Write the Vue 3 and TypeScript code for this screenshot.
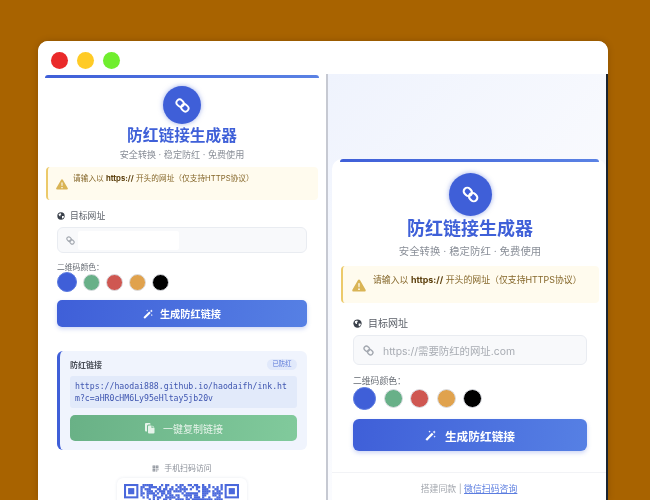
<script setup lang="ts">
const qr: { x: number; y: number }[] = [];
let seed = 7;
for (let r = 0; r < 10; r++) {
  for (let c = 8; c < 48; c++) {
    seed = (seed * 1103 + 12345) % 65536;
    if (seed % 100 < 52) qr.push({ x: c, y: r });
  }
}
const swatches = ["blue", "green", "red", "orange", "black"];
</script>

<template>
  <svg class="defs" aria-hidden="true">
    <symbol id="i-link" viewBox="0 0 24 24">
      <g fill="none" stroke="currentColor" stroke-width="3" transform="rotate(45 12 12)">
        <rect x="0.500" y="7" width="12.500" height="10" rx="5" />
        <rect x="11" y="7" width="12.500" height="10" rx="5" />
      </g>
    </symbol>
    <symbol id="i-globe" viewBox="0 0 24 24">
      <circle cx="12" cy="12" r="11" fill="currentColor" />
      <path d="M5 6l6-2 2 3-3 3 1 3-3 0-3-4zM15 12l5 0 1 3-4 5-2-3z" fill="#fff" />
    </symbol>
    <symbol id="i-warn" viewBox="0 0 24 24">
      <path d="M12 2.500a2 2 0 0 1 1.700 1l9.600 16.600a2 2 0 0 1-1.700 3H2.400a2 2 0 0 1-1.700-3L10.300 3.500a2 2 0 0 1 1.700-1z" fill="currentColor" />
      <path d="M10.800 9h2.400l-.4 7h-1.600zM10.700 18h2.600v2.400h-2.600z" fill="#fff" />
    </symbol>
    <symbol id="i-wand" viewBox="0 0 24 24">
      <path d="M1 20L15 6l3.500 3.500L4.500 23.500z" fill="currentColor" />
      <path d="M20 1l1.200 2.300L23.500 4.500l-2.300 1.200L20 8l-1.200-2.300L16.500 4.500l2.300-1.200zM10 1l.8 1.700L12.500 3.500l-1.700.8L10 6l-.8-1.700L7.500 3.500l1.700-.8zM21 12l.8 1.700 1.700.8-1.700.8-.8 1.700-.8-1.700-1.700-.8 1.700-.8z" fill="currentColor" />
    </symbol>
    <symbol id="i-copy" viewBox="0 0 24 24">
      <path d="M2 4a2 2 0 0 1 2-2h7a2 2 0 0 1 2 2v1H9a3 3 0 0 0-3 3v11H4a2 2 0 0 1-2-2z" fill="currentColor" />
      <path d="M8 9a2 2 0 0 1 2-2h5v5h6v9a2 2 0 0 1-2 2h-9a2 2 0 0 1-2-2zM17 7l4 4h-4z" fill="currentColor" />
    </symbol>
    <symbol id="i-qr" viewBox="0 0 24 24">
      <path d="M2 2h9v9H2zm3 3v3h3V5zM13 2h9v9h-9zm3 3v3h3V5zM2 13h9v9H2zm3 3v3h3v-3zM13 13h3v3h-3zM19 13h3v5h-3zM13 19h5v3h-5zM16 16h2v2h-2z" fill="currentColor" fill-rule="evenodd" />
    </symbol>
  </svg>

  <div class="desk">
    <div class="window">
      <div class="titlebar">
        <span class="dot dot-red"></span>
        <span class="dot dot-yellow"></span>
        <span class="dot dot-green"></span>
      </div>
      <div class="panes">
        <section class="pane pane-left">
          <div class="card">
            <div class="badge"><svg class="badge-icon"><use href="#i-link" /></svg></div>
            <h1 class="title">防红链接生成器</h1>
            <p class="subtitle">安全转换 · 稳定防红 · 免费使用</p>
            <div class="alert">
              <svg class="alert-icon"><use href="#i-warn" /></svg>
              <span class="alert-text">请输入以 <b>https://</b> 开头的网址（仅支持HTTPS协议）</span>
            </div>
            <div class="label"><svg class="label-icon"><use href="#i-globe" /></svg>目标网址</div>
            <div class="input">
              <svg class="input-icon"><use href="#i-link" /></svg>
              <span class="input-mask"></span>
            </div>
            <div class="color-label">二维码颜色：</div>
            <div class="swatches">
              <span v-for="(s, i) in swatches" :key="s" class="swatch" :class="[s, { active: i === 0 }]"></span>
            </div>
            <button class="primary"><svg class="btn-icon"><use href="#i-wand" /></svg>生成防红链接</button>
            <div class="result">
              <div class="result-head">
                <span class="result-title">防红链接</span>
                <span class="tag">已防红</span>
              </div>
              <div class="code">https://haodai888.github.io/haodaifh/ink.htm?c=aHR0cHM6Ly95eHltay5jb20v</div>
              <button class="copy"><svg class="copy-icon"><use href="#i-copy" /></svg>一键复制链接</button>
            </div>
            <div class="scan"><svg class="scan-icon"><use href="#i-qr" /></svg>手机扫码访问</div>
            <div class="qr-card">
              <svg class="qr" viewBox="0 0 56 56">
                <g fill="#4a68dc">
                  <rect v-for="(m, i) in qr" :key="i" :x="m.x" :y="m.y" width="1.1" height="1.1" />
                </g>
                <g v-for="x in [0, 49]" :key="x">
                  <rect :x="x" y="0" width="7" height="7" fill="#4a68dc" />
                  <rect :x="x + 1" y="1" width="5" height="5" fill="#fff" />
                  <rect :x="x + 2" y="2" width="3" height="3" fill="#4a68dc" />
                </g>
              </svg>
            </div>
          </div>
        </section>

        <section class="pane pane-right">
          <div class="card">
            <div class="badge"><svg class="badge-icon"><use href="#i-link" /></svg></div>
            <h1 class="title">防红链接生成器</h1>
            <p class="subtitle">安全转换 · 稳定防红 · 免费使用</p>
            <div class="alert">
              <svg class="alert-icon"><use href="#i-warn" /></svg>
              <span class="alert-text">请输入以 <b>https://</b> 开头的网址（仅支持HTTPS协议）</span>
            </div>
            <div class="label"><svg class="label-icon"><use href="#i-globe" /></svg>目标网址</div>
            <div class="input">
              <svg class="input-icon"><use href="#i-link" /></svg>
              <span class="placeholder">https://需要防红的网址.com</span>
            </div>
            <div class="color-label">二维码颜色：</div>
            <div class="swatches">
              <span v-for="(s, i) in swatches" :key="s" class="swatch" :class="[s, { active: i === 0 }]"></span>
            </div>
            <button class="primary"><svg class="btn-icon"><use href="#i-wand" /></svg>生成防红链接</button>
            <div class="footer">搭建同款 | <a class="footer-link">微信扫码咨询</a></div>
          </div>
        </section>
      </div>
    </div>
  </div>
</template>

<style>
html, body { margin: 0; height: 500px; overflow: hidden; background: #a86300; }
</style>

<style scoped>
.defs { display: none; }
.desk {
  box-sizing: border-box;
  width: 650px;
  height: 500px;
  padding: 41px 42px 0 38px;
  overflow: hidden;
  background: #a86300;
  font-family: Inter, "Noto Sans CJK SC", sans-serif;
  filter: blur(0.5px);
}
.window {
  height: 459px;
  display: flex;
  flex-direction: column;
  border-radius: 10px 10px 0 0;
  overflow: hidden;
  background: #fff;
  box-shadow: 0 0 6px rgba(60, 30, 0, 0.25);
}
.titlebar {
  flex: 0 0 33px;
  display: flex;
  align-items: center;
  gap: 9px;
  padding: 5px 0 0 13px;
  box-sizing: border-box;
  background: #fff;
}
.dot { width: 17px; height: 17px; border-radius: 50%; }
.dot-red { background: #ea2a2a; }
.dot-yellow { background: #ffcb26; }
.dot-green { background: #70ee2e; }
.panes { flex: 1; display: flex; min-height: 0; }
.pane { box-sizing: border-box; }
.pane-left { width: 288px; background: #fff; padding-top: 1px; }
.pane-right {
  flex: 1;
  padding: 85px 0 0 4px;
  border-left: 2px solid #c6c9d2;
  border-right: 2px solid #1a2430;
  background: linear-gradient(135deg, #eff3fd 0%, #fafbfe 60%, #f6f8fe 100%);
}
.card {
  position: relative;
  display: flex;
  flex-direction: column;
  background: #fff;
  border-radius: 10px;
}
.card > * { flex: none; }
.card::before {
  content: "";
  position: absolute;
  top: 0;
  height: 3px;
  border-radius: 3px 3px 0 0;
  background: linear-gradient(90deg, #3f5fd8, #5a82e4);
}
.badge {
  align-self: center;
  display: flex;
  align-items: center;
  justify-content: center;
  border-radius: 50%;
  background: #3f5fd8;
  color: #fff;
  box-shadow: 0 0 5px rgba(63, 95, 216, 0.5);
}
.title { margin: 0; text-align: center; font-weight: 700; color: #3f60d8; }
.subtitle { margin: 0; text-align: center; color: #8a8f98; }
.alert {
  display: flex;
  box-sizing: border-box;
  background: #fffbee;
  border-left: 2px solid #ecca6a;
  border-radius: 4px;
  color: #85672a;
}
.alert b { color: #5e4210; }
.alert-icon { color: #d9b455; flex: none; }
.label { display: flex; align-items: center; color: #5b6068; }
.label-icon { color: #3a404a; flex: none; }
.input {
  display: flex;
  align-items: center;
  box-sizing: border-box;
  background: #f8f9fb;
  border: 1px solid #e9ecf1;
  border-radius: 6px;
}
.input-icon { color: #a3a8b0; flex: none; }
.input-mask { background: #fff; border-radius: 2px; }
.placeholder { color: #a8acb3; }
.color-label { color: #666b73; }
.swatches { display: flex; align-items: center; }
.swatch {
  box-sizing: border-box;
  border-radius: 50%;
  border: 1px solid #dcdee3;
}
.swatch.blue { background: #3f5fd8; }
.swatch.green { background: #68b088; }
.swatch.red { background: #cf5751; }
.swatch.orange { background: #e0a24d; }
.swatch.black { background: #000; }
.swatch.active { border-color: #5c7be0; }
.primary {
  display: flex;
  align-items: center;
  justify-content: center;
  box-sizing: border-box;
  border: 0;
  padding: 0;
  color: #fff;
  font-family: inherit;
  font-weight: 700;
  background: linear-gradient(100deg, #3f5fd8, #5680e4);
  box-shadow: 0 2px 4px rgba(63, 95, 216, 0.25);
}
.pane-left .card { height: 500px; padding: 11px 19px 0; }
.pane-left .card::before { left: 7px; right: 7px; }
.pane-left .badge { width: 38px; height: 38px; }
.pane-left .badge-icon { width: 15px; height: 15px; }
.pane-left .title { margin-top: 2px; font-size: 15.7px; line-height: 20px; }
.pane-left .subtitle { margin-top: 3px; font-size: 9.1px; line-height: 12px; }
.pane-left .alert { margin: 6px -11px 0; height: 33px; padding: 6px 0 0 8px; font-size: 7.7px; line-height: 12px; gap: 5px; }
.pane-left .alert-icon { width: 12px; height: 12px; margin-top: 5px; }
.pane-left .label { margin-top: 10px; font-size: 8.8px; line-height: 12px; }
.pane-left .label-icon { width: 8px; height: 8px; margin-right: 5px; }
.pane-left .input { margin-top: 5px; height: 26px; padding-left: 8px; }
.pane-left .input-icon { width: 9px; height: 9px; margin-right: 3px; }
.pane-left .input-mask { width: 101px; height: 19px; }
.pane-left .color-label { margin-top: 9px; font-size: 7.8px; line-height: 10px; }
.pane-left .swatches { height: 20px; gap: 6px; }
.pane-left .swatch { width: 17px; height: 17px; }
.pane-left .swatch.active { width: 20px; height: 20px; }
.pane-left .primary { margin-top: 8px; height: 27px; border-radius: 5px; font-size: 10.2px; }
.pane-left .btn-icon { width: 10px; height: 10px; margin-right: 7px; }

.result {
  box-sizing: border-box;
  margin-top: 24px;
  height: 99px;
  padding: 7px 10px 0 10px;
  background: #f0f4fd;
  border-left: 3px solid #3f5fd8;
  border-radius: 6px;
}
.result-head { display: flex; align-items: center; justify-content: space-between; height: 12px; }
.result-title { font-size: 8px; font-weight: 700; color: #4a4f58; }
.tag {
  box-sizing: border-box;
  width: 30px;
  height: 11px;
  border-radius: 6px;
  background: #e1e9fb;
  color: #5a78d8;
  font-size: 6.3px;
  line-height: 11px;
  text-align: center;
}
.code {
  box-sizing: border-box;
  margin-top: 6px;
  height: 32px;
  padding: 4px 5px;
  border-radius: 3px;
  background: #e2eafa;
  color: #3f56b0;
  font-family: "DejaVu Sans Mono", monospace;
  font-size: 8.2px;
  line-height: 12px;
  word-break: break-all;
}
.copy {
  display: flex;
  align-items: center;
  justify-content: center;
  box-sizing: border-box;
  width: 100%;
  height: 26px;
  margin-top: 7px;
  border: 0;
  padding: 0;
  border-radius: 5px;
  color: #e6f3ea;
  font-family: inherit;
  font-size: 10px;
  background: linear-gradient(100deg, #69b186, #81ca9c);
}
.copy-icon { width: 12px; height: 12px; margin-right: 7px; }
.scan {
  display: flex;
  align-items: center;
  justify-content: center;
  margin-top: 13px;
  font-size: 7.9px;
  line-height: 10px;
  color: #8a8f98;
}
.scan-icon { width: 7px; height: 7px; margin-right: 5px; }
.qr-card {
  align-self: center;
  box-sizing: border-box;
  width: 130px;
  height: 130px;
  margin-top: 5px;
  padding: 6px 7px;
  border-radius: 6px;
  background: #fff;
  box-shadow: 0 0 3px rgba(60, 80, 130, 0.12);
}
.qr { display: block; width: 115px; height: 115px; }

.pane-right .card { height: 341px; padding: 14px 19px 0 21px; }
.pane-right .card::before { left: 8px; right: 7px; }
.pane-right .badge { width: 43px; height: 43px; }
.pane-right .badge-icon { width: 17px; height: 17px; }
.pane-right .title { margin-top: 1px; font-size: 18px; line-height: 24px; }
.pane-right .subtitle { margin-top: 4px; font-size: 10.4px; line-height: 14px; }
.pane-right .alert { margin: 7px -12px 0; height: 37px; padding: 7px 0 0 9px; font-size: 8.9px; line-height: 13px; gap: 7px; }
.pane-right .alert-icon { width: 14px; height: 14px; margin-top: 5px; }
.pane-right .label { margin-top: 13px; font-size: 10px; line-height: 14px; }
.pane-right .label-icon { width: 9px; height: 9px; margin-right: 6px; }
.pane-right .input { margin-top: 5px; height: 30px; padding-left: 9px; }
.pane-right .input-icon { width: 11px; height: 11px; margin-right: 9px; }
.pane-right .placeholder { font-size: 10.4px; }
.pane-right .color-label { margin-top: 10px; font-size: 8.8px; line-height: 12px; }
.pane-right .swatches { height: 23px; gap: 7.5px; }
.pane-right .swatch { width: 19px; height: 19px; }
.pane-right .swatch.active { width: 23px; height: 23px; }
.pane-right .primary { margin-top: 9px; height: 32px; border-radius: 6px; font-size: 11.7px; }
.pane-right .btn-icon { width: 11px; height: 11px; margin-right: 9px; }
.footer {
  margin: 21px -19px 0 -21px;
  padding-top: 10px;
  border-top: 1px solid #f2f3f6;
  text-align: center;
  font-size: 8.9px;
  line-height: 12px;
  color: #a3a7ae;
}
.footer-link { color: #5b7de0; text-decoration: underline; }
</style>
